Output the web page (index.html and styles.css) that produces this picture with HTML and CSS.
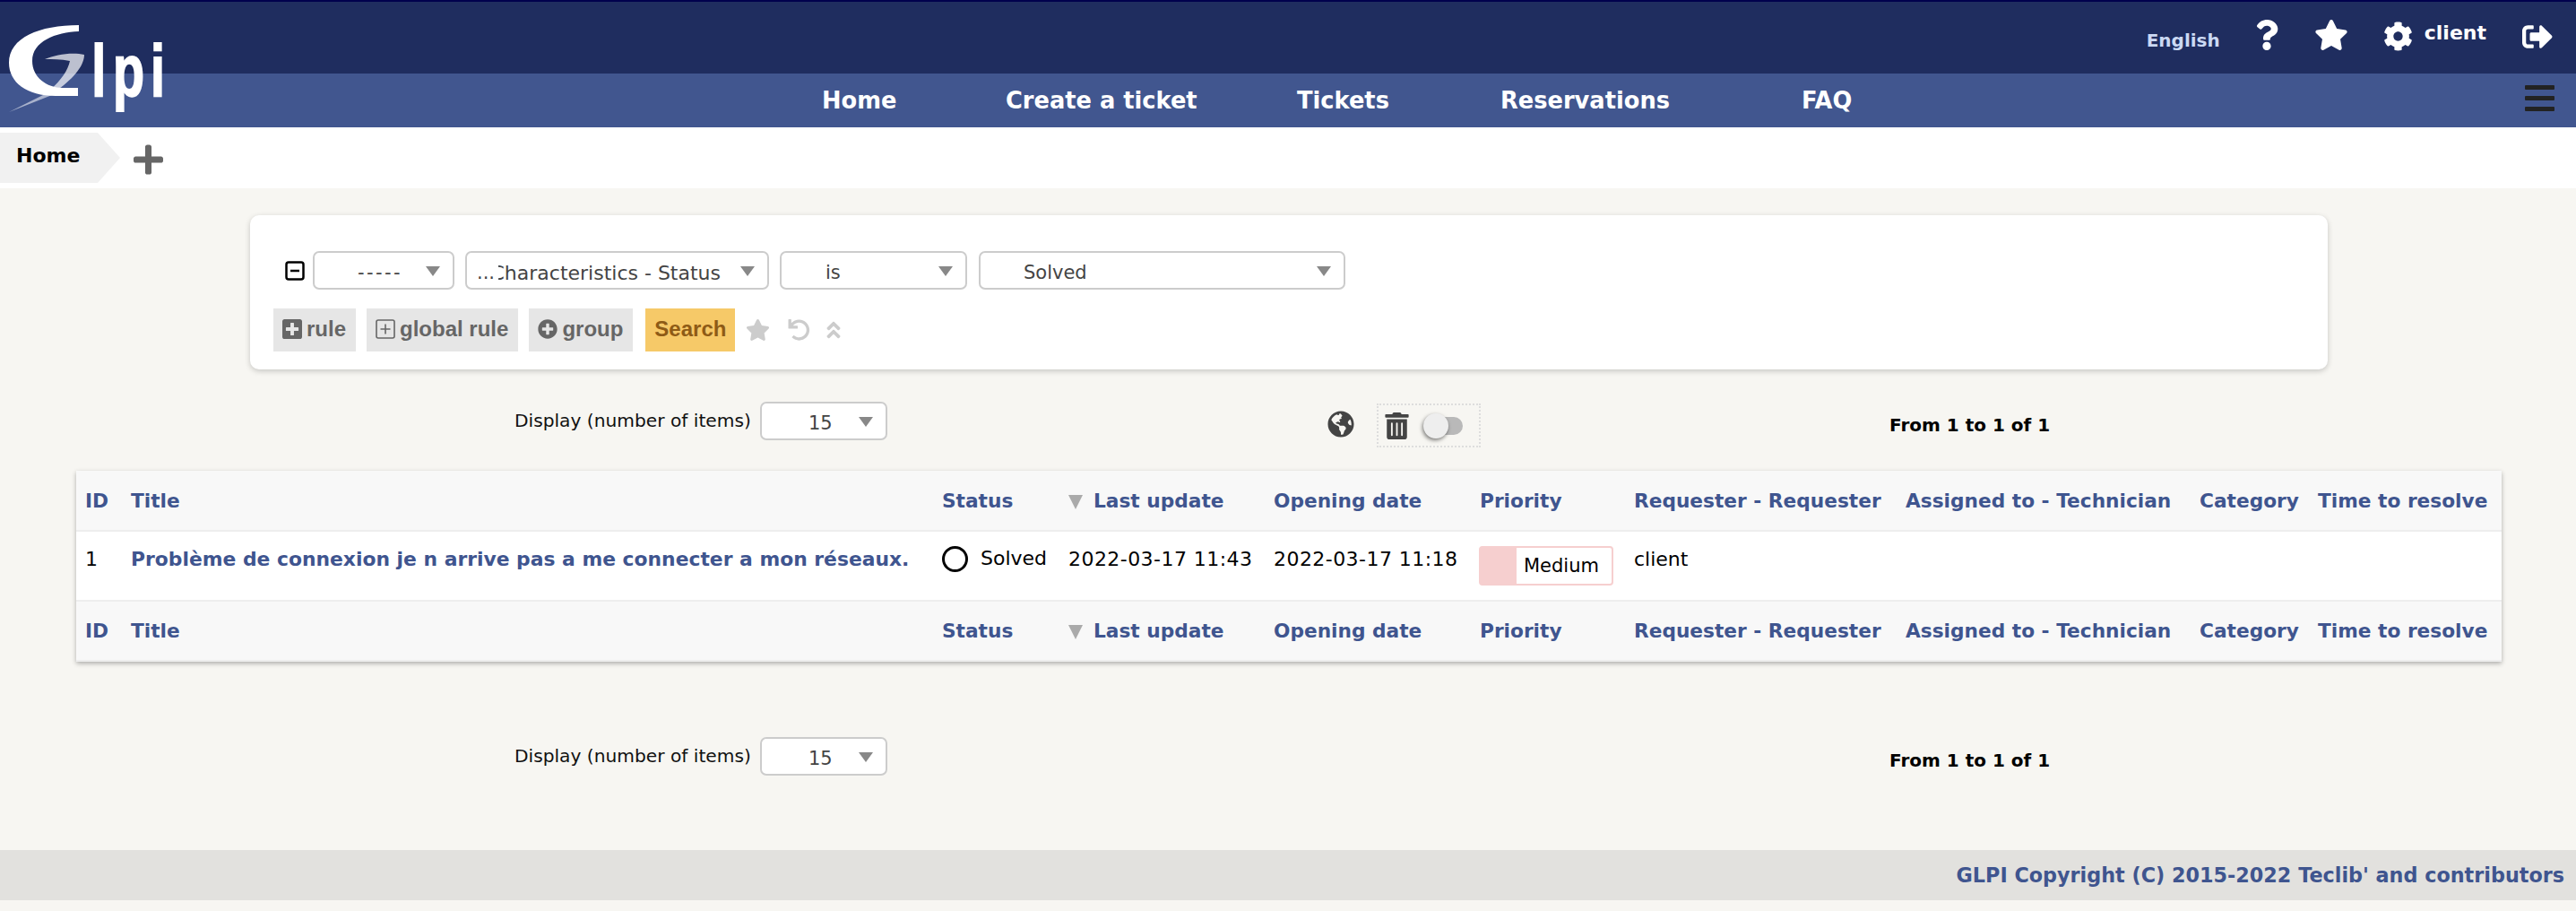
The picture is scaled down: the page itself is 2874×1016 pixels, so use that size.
FILE: index.html
```html
<!DOCTYPE html>
<html lang="en">
<head>
<meta charset="UTF-8">
<title>GLPI - Tickets</title>
<link rel="stylesheet" href="styles.css">
</head>
<body>

<header class="header">
    <svg class="logo" viewBox="0 0 190 130" width="190" height="130">
        <path fill="#fff" d="M88 28L88 35C62 36 36 46 36 68C36 86 52 98 70 98L87 98L87 107L62 107C30 107 10 92 10 70C10 42 44 28 88 28Z"/>
        <path fill="#fff" opacity="0.7" d="M50 66C62 61 80 58 94 61C94 74 80 90 60 103L56 100C68 90 76 78 78 68C68 66 58 66 50 66Z"/>
        <path fill="#fff" opacity="0.55" d="M10 125L48 106L58 106Z"/>
        <text class="logo-text" transform="scale(0.7 1)" x="146 180 240" y="107">lpi</text>
    </svg>
    <div class="top-bar">
        <span class="lang">English</span>
        <svg class="top-icon help" viewBox="0 0 384 512"><path d="M202.021 0C122.202 0 70.503 32.703 29.914 91.026c-7.363 10.58-5.093 25.086 5.178 32.874l43.138 32.709c10.373 7.865 25.132 6.026 33.253-4.148 25.049-31.381 43.63-49.449 82.757-49.449 30.764 0 68.816 19.799 68.816 49.631 0 22.552-18.617 34.134-48.993 51.164-35.423 19.86-82.299 44.576-82.299 106.405V320c0 13.255 10.745 24 24 24h72.471c13.255 0 24-10.745 24-24v-5.773c0-42.86 125.268-44.645 125.268-160.627C377.504 66.256 286.902 0 202.021 0zM192 373.459c-38.196 0-69.271 31.075-69.271 69.271 0 38.195 31.075 69.27 69.271 69.27s69.271-31.075 69.271-69.271-31.075-69.27-69.271-69.27z"/></svg>
        <svg class="top-icon fav" viewBox="0 0 576 512"><path d="M259.3 17.8L194 150.2 47.9 171.5c-26.2 3.8-36.7 36.1-17.7 54.6l105.7 103-25 145.5c-4.5 26.3 23.2 46 46.4 33.7L288 439.6l130.7 68.7c23.2 12.2 50.9-7.4 46.4-33.7l-25-145.5 105.7-103c19-18.5 8.5-50.8-17.7-54.6L382 150.2 316.7 17.8c-11.7-23.6-45.6-23.9-57.4 0z"/></svg>
        <svg class="top-icon gear" viewBox="0 0 512 512"><path d="M487.4 315.7l-42.6-24.6c4.3-23.2 4.3-47 0-70.2l42.6-24.6c4.9-2.8 7.1-8.6 5.5-14-11.1-35.6-30-67.8-54.7-94.6-3.8-4.1-10-5.1-14.8-2.3L380.8 110c-17.9-15.4-38.5-27.3-60.8-35.1V25.8c0-5.6-3.9-10.5-9.4-11.7-36.7-8.2-74.3-7.8-109.2 0-5.5 1.2-9.4 6.1-9.4 11.7V75c-22.2 7.9-42.8 19.8-60.8 35.1L88.7 85.5c-4.9-2.8-11-1.9-14.8 2.3-24.7 26.7-43.6 58.9-54.7 94.6-1.7 5.4.6 11.2 5.5 14L67.3 221c-4.3 23.2-4.3 47 0 70.2l-42.6 24.6c-4.9 2.8-7.1 8.6-5.5 14 11.1 35.6 30 67.8 54.7 94.6 3.8 4.1 10 5.1 14.8 2.3l42.6-24.6c17.9 15.4 38.5 27.3 60.8 35.1v49.2c0 5.6 3.9 10.5 9.4 11.7 36.7 8.2 74.3 7.8 109.2 0 5.5-1.2 9.4-6.1 9.4-11.7v-49.2c22.2-7.9 42.8-19.8 60.8-35.1l42.6 24.6c4.9 2.8 11 1.9 14.8-2.3 24.7-26.7 43.6-58.9 54.7-94.6 1.5-5.5-.7-11.3-5.6-14.1zM256 336c-44.1 0-80-35.9-80-80s35.9-80 80-80 80 35.9 80 80-35.9 80-80 80z"/></svg>
        <span class="user">client</span>
        <svg class="top-icon logout" viewBox="0 0 512 512"><path d="M497 273L329 441c-15 15-41 4.5-41-17v-96H152c-13.3 0-24-10.7-24-24v-96c0-13.3 10.7-24 24-24h136V88c0-21.4 25.9-32 41-17l168 168c9.3 9.4 9.3 24.6 0 34zM192 436v-40c0-6.6-5.4-12-12-12H96c-17.7 0-32-14.3-32-32V160c0-17.7 14.3-32 32-32h84c6.6 0 12-5.4 12-12V76c0-6.6-5.4-12-12-12H96c-53 0-96 43-96 96v192c0 53 43 96 96 96h84c6.6 0 12-5.4 12-12z"/></svg>
    </div>
    <nav class="nav">
        <a>Home</a>
        <a>Create a ticket</a>
        <a>Tickets</a>
        <a>Reservations</a>
        <a>FAQ</a>
        <div class="burger"><i></i><i></i><i></i></div>
    </nav>
</header>

<div class="tabs">
    <div class="crumb">Home</div>
    <svg class="tab-plus" viewBox="0 0 448 512"><path d="M416 208H272V64c0-17.67-14.33-32-32-32h-32c-17.67 0-32 14.33-32 32v144H32c-17.67 0-32 14.33-32 32v32c0 17.67 14.33 32 32 32h144v144c0 17.67 14.33 32 32 32h32c17.67 0 32-14.33 32-32V304h144c17.67 0 32-14.33 32-32v-32c0-17.67-14.33-32-32-32z"/></svg>
</div>

<main class="main">
    <section class="search-card">
        <div class="criteria">
            <svg class="minus" viewBox="0 0 22 22"><rect x="1.5" y="1.5" width="19" height="19" rx="2.5"/><path d="M6 11h10"/></svg>
            <div class="select sel-link"><span class="val">-----</span><b class="arrow"></b></div>
            <div class="select sel-field"><span class="dots">...</span><span class="clip"><span>Characteristics - Status</span></span><b class="arrow"></b></div>
            <div class="select sel-op"><span class="val">is</span><b class="arrow"></b></div>
            <div class="select sel-value"><span class="val">Solved</span><b class="arrow"></b></div>
        </div>
        <div class="actions">
            <a class="btn">
                <svg viewBox="0 0 448 512"><path d="M400 32H48C21.5 32 0 53.5 0 80v352c0 26.5 21.5 48 48 48h352c26.5 0 48-21.5 48-48V80c0-26.5-21.5-48-48-48zm-32 252c0 6.6-5.4 12-12 12h-92v92c0 6.6-5.4 12-12 12h-56c-6.6 0-12-5.4-12-12v-92H92c-6.6 0-12-5.4-12-12v-56c0-6.6 5.4-12 12-12h92v-92c0-6.6 5.4-12 12-12h56c6.6 0 12 5.4 12 12v92h92c6.6 0 12 5.4 12 12v56z"/></svg>
                rule</a>
            <a class="btn">
                <svg class="outline" viewBox="0 0 22 24"><rect x="1" y="2" width="20" height="20" rx="2"/><path d="M11 6.500v11M5.500 12h11"/></svg>
                global rule</a>
            <a class="btn">
                <svg viewBox="0 0 512 512"><path d="M256 8C119 8 8 119 8 256s111 248 248 248 248-111 248-248S393 8 256 8zm144 276c0 6.600-5.400 12-12 12h-92v92c0 6.600-5.400 12-12 12h-56c-6.600 0-12-5.400-12-12v-92h-92c-6.600 0-12-5.400-12-12v-56c0-6.600 5.400-12 12-12h92v-92c0-6.600 5.400-12 12-12h56c6.600 0 12 5.400 12 12v92h92c6.600 0 12 5.400 12 12v56z"/></svg>
                group</a>
            <a class="btn btn-search">Search</a>
            <svg class="tool tool-star" viewBox="0 0 576 512"><path d="M259.3 17.8L194 150.2 47.9 171.5c-26.2 3.8-36.7 36.1-17.7 54.6l105.7 103-25 145.5c-4.5 26.3 23.2 46 46.4 33.7L288 439.6l130.7 68.7c23.2 12.2 50.9-7.4 46.4-33.7l-25-145.5 105.7-103c19-18.5 8.5-50.8-17.7-54.6L382 150.2 316.7 17.8c-11.7-23.6-45.6-23.9-57.4 0z"/></svg>
            <svg class="tool tool-undo" viewBox="0 0 512 512"><path d="M212.333 224.333H12c-6.627 0-12-5.373-12-12V12C0 5.373 5.373 0 12 0h48c6.627 0 12 5.373 12 12v78.112C117.773 39.279 184.26 7.47 258.175 8.007c136.906.994 246.448 111.623 246.157 248.532C504.041 393.258 393.12 504 256.333 504c-64.089 0-122.496-24.313-166.51-64.215-5.099-4.622-5.334-12.554-.467-17.42l33.967-33.967c4.474-4.474 11.662-4.717 16.401-.525C170.76 415.336 211.58 432 256.333 432c97.268 0 176-78.716 176-176 0-97.267-78.716-176-176-176-58.496 0-110.28 28.476-142.274 72.333h98.274c6.627 0 12 5.373 12 12v48c0 6.627-5.373 12-12 12z"/></svg>
            <svg class="tool tool-up" viewBox="0 0 320 512"><path d="M177 255.700l136 136c9.400 9.400 9.400 24.600 0 33.900l-22.600 22.600c-9.400 9.400-24.600 9.400-33.900 0L160 351.900l-96.400 96.400c-9.400 9.400-24.600 9.400-33.900 0L7 425.700c-9.400-9.400-9.400-24.600 0-33.900l136-136c9.400-9.500 24.600-9.500 34-.1zm-34-192L7 199.700c-9.400 9.400-9.400 24.600 0 33.900l22.600 22.600c9.400 9.400 24.600 9.400 33.900 0l96.400-96.400 96.400 96.400c9.400 9.400 24.600 9.400 33.900 0l22.600-22.600c9.400-9.400 9.400-24.600 0-33.900l-136-136c-9.200-9.400-24.400-9.400-33.800 0z"/></svg>
        </div>
    </section>

    <div class="pager pager-top">
        <span class="pager-label">Display (number of items)</span>
        <div class="select sel-count"><span class="val">15</span><b class="arrow"></b></div>
        <svg class="globe" viewBox="0 0 496 512"><path d="M248 8C111.030 8 0 119.030 0 256s111.030 248 248 248 248-111.030 248-248S384.970 8 248 8zm82.290 357.600c-3.900 3.880-7.990 7.950-11.310 11.280-2.990 3-5.100 6.700-6.170 10.710-1.510 5.660-2.730 11.380-4.770 16.870l-17.390 46.850c-13.760 3-28 4.690-42.650 4.690v-27.380c1.690-12.620-7.640-36.260-22.630-51.250-6-6-9.370-14.140-9.370-22.630v-32.010c0-11.640-6.270-22.340-16.460-27.970-14.370-7.950-34.810-19.060-48.810-26.110-11.480-5.780-22.100-13.140-31.650-21.750l-.8-.72a114.792 114.792 0 0 1-18.060-20.740c-9.380-13.770-24.66-36.420-34.59-51.140 20.470-45.500 57.360-82.040 103.200-101.890l24.010 12.010C203.480 89.740 216 82.010 216 70.110v-11.300c7.990-1.290 16.120-2.110 24.390-2.420l28.300 28.300c6.250 6.250 6.250 16.380 0 22.630L264 112l-10.340 10.340c-3.120 3.120-3.120 8.190 0 11.310l4.690 4.690c3.120 3.120 3.120 8.190 0 11.310l-8 8a8.008 8.008 0 0 1-5.660 2.340h-8.990c-2.080 0-4.080.81-5.580 2.270l-9.920 9.650a8.008 8.008 0 0 0-1.580 9.310l15.590 31.190c2.660 5.320-1.210 11.580-7.150 11.580h-5.640c-1.930 0-3.790-.7-5.240-1.960l-9.280-8.060a16.017 16.017 0 0 0-15.550-3.100l-31.170 10.390a11.950 11.950 0 0 0-8.170 11.340c0 4.530 2.560 8.660 6.610 10.690l11.080 5.540c9.410 4.710 19.790 7.160 30.310 7.160s22.590 27.290 32 32h66.750c8.490 0 16.620 3.370 22.630 9.370l13.690 13.690a30.503 30.503 0 0 1 8.930 21.570 46.536 46.536 0 0 1-13.720 32.980zM417 274.250c-5.790-1.450-10.840-5-14.150-9.970l-17.980-26.970a23.970 23.970 0 0 1 0-26.620l19.590-29.380c2.320-3.470 5.500-6.290 9.240-8.150l12.980-6.490C440.200 193.590 448 223.870 448 256c0 8.670-.74 17.160-1.820 25.540L417 274.250z"/></svg>
        <div class="mass">
            <svg class="trash" viewBox="0 0 448 512"><path d="M32 464a48 48 0 0 0 48 48h288a48 48 0 0 0 48-48V128H32zm272-256a16 16 0 0 1 32 0v224a16 16 0 0 1-32 0zm-96 0a16 16 0 0 1 32 0v224a16 16 0 0 1-32 0zm-96 0a16 16 0 0 1 32 0v224a16 16 0 0 1-32 0zM432 32H312l-9.400-18.700A24 24 0 0 0 281.100 0H166.800a23.720 23.720 0 0 0-21.400 13.300L136 32H16A16 16 0 0 0 0 48v32a16 16 0 0 0 16 16h416a16 16 0 0 0 16-16V48a16 16 0 0 0-16-16z"/></svg>
            <div class="toggle"><i></i></div>
        </div>
        <span class="pager-count">From 1 to 1 of 1</span>
    </div>

    <table class="tickets">
        <colgroup>
            <col class="c-id"><col class="c-title"><col class="c-status"><col class="c-update"><col class="c-open"><col class="c-prio"><col class="c-req"><col class="c-tech"><col class="c-cat"><col class="c-time">
        </colgroup>
        <thead>
            <tr>
                <th>ID</th><th>Title</th><th>Status</th>
                <th><b class="sort"></b>Last update</th>
                <th>Opening date</th><th>Priority</th><th>Requester - Requester</th><th>Assigned to - Technician</th><th>Category</th><th>Time to resolve</th>
            </tr>
        </thead>
        <tbody>
            <tr>
                <td>1</td>
                <td><a class="ticket-link">Problème de connexion je n arrive pas a me connecter a mon réseaux.</a></td>
                <td><i class="status-dot"></i>Solved</td>
                <td class="date">2022-03-17 11:43</td>
                <td class="date">2022-03-17 11:18</td>
                <td class="prio-cell"><div class="prio"><i></i><span>Medium</span></div></td>
                <td>client</td>
                <td></td><td></td><td></td>
            </tr>
        </tbody>
        <tfoot>
            <tr>
                <th>ID</th><th>Title</th><th>Status</th>
                <th><b class="sort"></b>Last update</th>
                <th>Opening date</th><th>Priority</th><th>Requester - Requester</th><th>Assigned to - Technician</th><th>Category</th><th>Time to resolve</th>
            </tr>
        </tfoot>
    </table>

    <div class="pager pager-bottom">
        <span class="pager-label">Display (number of items)</span>
        <div class="select sel-count"><span class="val">15</span><b class="arrow"></b></div>
        <span class="pager-count">From 1 to 1 of 1</span>
    </div>
</main>

<footer class="footer">GLPI Copyright (C) 2015-2022 Teclib' and contributors</footer>

</body>
</html>
```

FILE: styles.css
```css
* {
    box-sizing: border-box;
}

body {
    margin: 0;
    height: 1016px;
    overflow: hidden;
    background-color: #f7f6f2;
    font-family: "DejaVu Sans", Verdana, sans-serif;
    font-size: 22px;
    color: #000;
}

/* header */
.header {
    position: relative;
    height: 142px;
    background-color: #41568f;
}

.logo {
    position: absolute;
    left: 0;
    top: 0;
}

.logo-text {
    font-family: "Liberation Sans", Arial, sans-serif;
    font-weight: bold;
    font-size: 82px;
    fill: #fff;
    stroke: #fff;
    stroke-width: 2;
}

.top-bar {
    display: flex;
    align-items: center;
    height: 82px;
    padding-right: 26px;
    justify-content: flex-end;
    background-color: #1f2d5f;
    border-top: 2px solid #00004d;
    color: #fff;
    font-weight: bold;
}

.top-icon {
    fill: #fff;
    display: block;
}

.lang {
    color: #cbd9f3;
    font-size: 20px;
    margin-right: 39px;
    margin-top: 6px;
}

.help {
    width: 26px;
    height: 34px;
    margin-right: 40px;
    margin-top: -6px;
}

.fav {
    width: 38px;
    height: 34px;
    margin-right: 39px;
    margin-top: -6px;
}

.gear {
    width: 33px;
    height: 33px;
    margin-right: 13px;
    margin-top: -4px;
}

.user {
    font-size: 22px;
    margin-right: 40px;
    margin-top: -12px;
}

.logout {
    width: 34px;
    height: 34px;
    margin-top: -2px;
}

.nav {
    display: grid;
    grid-template-columns: 205px 325px 227px 336px 1fr;
    align-items: center;
    height: 60px;
    padding-left: 917px;
    position: relative;
    color: #fff;
    font-size: 25.700px;
    font-weight: bold;
}

.burger {
    position: absolute;
    right: 24px;
    top: 13px;
    width: 33px;
}

.burger i {
    display: block;
    height: 5px;
    margin-bottom: 7px;
    border-radius: 1px;
    background-color: #222;
}

/* tabs */
.tabs {
    display: flex;
    align-items: center;
    height: 68px;
    background-color: #fff;
}

.crumb {
    width: 134px;
    height: 56px;
    padding-left: 18px;
    line-height: 52px;
    font-weight: bold;
    font-size: 22px;
    background-color: #f1f1f1;
    clip-path: polygon(0 0, 109px 0, 134px 28px, 109px 56px, 0 56px);
}

.tab-plus {
    width: 33px;
    height: 38px;
    margin-left: 15px;
    margin-top: 4px;
    fill: #666;
}

/* search card */
.main {
    height: 738px;
    padding-top: 30px;
}

.search-card {
    width: 2318px;
    height: 172px;
    margin-left: 279px;
    padding: 40px 0 0 26px;
    background-color: #fff;
    border-radius: 10px;
    box-shadow: 0 2px 6px rgba(0, 0, 0, 0.2);
}

.criteria {
    display: flex;
    align-items: center;
}

.minus {
    width: 22px;
    height: 22px;
    margin: 0 9px 0 13px;
    fill: none;
    stroke: #000;
    stroke-width: 2.5;
}

.select {
    position: relative;
    height: 43px;
    line-height: 43px;
    background-color: #fff;
    border: 2px solid #ccc;
    border-radius: 7px;
    color: #444;
    font-size: 21px;
    white-space: nowrap;
}

.arrow {
    position: absolute;
    top: 15px;
    right: 14px;
    border-top: 11px solid #888;
    border-left: 8px solid transparent;
    border-right: 8px solid transparent;
}

.val {
    position: absolute;
    top: 1px;
}

.sel-link {
    width: 158px;
    margin-right: 12px;
}

.sel-link .val {
    left: 48px;
    letter-spacing: 2.400px;
}

.sel-field {
    width: 339px;
    margin-right: 12px;
}

.dots {
    position: absolute;
    left: 11px;
    top: 1px;
}

.clip {
    position: absolute;
    left: 35px;
    top: 1px;
    width: 248px;
    overflow: hidden;
    direction: rtl;
    font-size: 22px;
}

.clip span {
    direction: ltr;
    unicode-bidi: embed;
}

.sel-op {
    width: 209px;
    margin-right: 13px;
}

.sel-op .val {
    left: 49px;
}

.sel-value {
    width: 409px;
}

.sel-value .val {
    left: 48px;
}

.actions {
    display: flex;
    align-items: center;
    margin-top: 21px;
}

.btn {
    display: flex;
    align-items: center;
    height: 48px;
    margin-right: 12px;
    padding: 0 11px 2px 10px;
    background-color: #e6e6e6;
    color: #666;
    fill: #666;
    font-family: "Liberation Sans", Arial, sans-serif;
    font-size: 24px;
    font-weight: bold;
}

.btn svg {
    width: 22px;
    height: 26px;
    margin-right: 5px;
}

.btn .outline {
    fill: none;
    stroke: #666;
    stroke-width: 1.6;
}

.btn-search {
    margin-left: 2px;
    margin-right: 0;
    padding-right: 10px;
    background-color: #f6c968;
    color: #8e5b16;
}

.tool {
    fill: #ccc;
    height: 24px;
}

.tool-star {
    width: 27px;
    margin-left: 12px;
}

.tool-undo {
    width: 25px;
    margin-left: 20px;
}

.tool-up {
    width: 16px;
    margin-left: 18px;
}

/* pager rows */
.pager {
    position: relative;
    display: flex;
    align-items: center;
    height: 52px;
    padding-left: 574px;
}

.pager-top {
    margin-top: 31px;
}

.pager-bottom {
    margin-top: 79px;
}

.pager-label {
    width: 274px;
    font-size: 20.200px;
    color: #111;
}

.sel-count {
    width: 142px;
}

.sel-count .val {
    left: 52px;
}

.pager-count {
    position: absolute;
    left: 2108px;
    font-weight: bold;
    font-size: 20px;
}

.pager-top .pager-count {
    top: 19px;
}

.pager-bottom .pager-count {
    top: 19px;
}

.globe {
    width: 30px;
    height: 30px;
    margin-left: 491px;
    margin-top: 8px;
    fill: #444;
}

.mass {
    display: flex;
    align-items: center;
    width: 116px;
    height: 49px;
    margin-left: 25px;
    margin-top: 11px;
    padding-left: 7px;
    border: 2px dotted #ddd;
}

.trash {
    width: 27px;
    height: 30px;
    fill: #444;
}

.toggle {
    position: relative;
    width: 44px;
    height: 20px;
    margin-left: 16px;
    border-radius: 10px;
    background-color: #b9b9b9;
}

.toggle i {
    position: absolute;
    left: 0;
    top: -4px;
    width: 28px;
    height: 28px;
    border-radius: 50%;
    background-color: #eee;
    box-shadow: -1px 2px 4px rgba(0, 0, 0, 0.5);
}

/* ticket table */
.tickets {
    width: 2706px;
    margin: 30px 0 0 85px;
    table-layout: fixed;
    border-collapse: collapse;
    background-color: #fff;
    box-shadow: 0 2px 5px rgba(0, 0, 0, 0.3);
}

.c-id { width: 51px; }
.c-title { width: 905px; }
.c-status { width: 141px; }
.c-update { width: 229px; }
.c-open { width: 230px; }
.c-prio { width: 172px; }
.c-req { width: 303px; }
.c-tech { width: 328px; }
.c-cat { width: 132px; }
.c-time { width: 215px; }

.tickets th,
.tickets td {
    padding: 0 0 0 10px;
    text-align: left;
    white-space: nowrap;
    overflow: hidden;
}

.tickets th {
    height: 67px;
    background-color: #f8f8f8;
    color: #3f558f;
    font-size: 21.700px;
}

.tickets thead th {
    border-bottom: 2px solid #eee;
}

.tickets tfoot th {
    border-top: 2px solid #eee;
    border-bottom: 2px solid #eee;
}

.tickets td {
    height: 78px;
    padding-bottom: 16px;
    font-size: 22px;
}

.tickets .prio-cell {
    padding: 0 0 0 9px;
    font-size: 21px;
}

.tickets .date {
    letter-spacing: 0.450px;
}

.ticket-link {
    color: #3f558f;
    font-weight: bold;
    font-size: 21.850px;
}

.sort {
    display: inline-block;
    margin-right: 12px;
    vertical-align: -2px;
    border-top: 16px solid #aaa;
    border-left: 8px solid transparent;
    border-right: 8px solid transparent;
}

.status-dot {
    display: inline-block;
    width: 29px;
    height: 29px;
    margin-right: 14px;
    vertical-align: -8px;
    border: 3px solid #000;
    border-radius: 50%;
}

.prio {
    display: flex;
    align-items: center;
    width: 150px;
    height: 44px;
    border: 2px solid #f6cfcf;
    border-radius: 4px;
}

.prio i {
    width: 40px;
    height: 100%;
    background-color: #f6cfcf;
}

.prio span {
    margin-left: 8px;
}

/* footer */
.footer {
    height: 56px;
    padding-right: 13px;
    line-height: 56px;
    text-align: right;
    background-color: #e2e1de;
    color: #3f558f;
    font-size: 22.300px;
    font-weight: bold;
}
```
